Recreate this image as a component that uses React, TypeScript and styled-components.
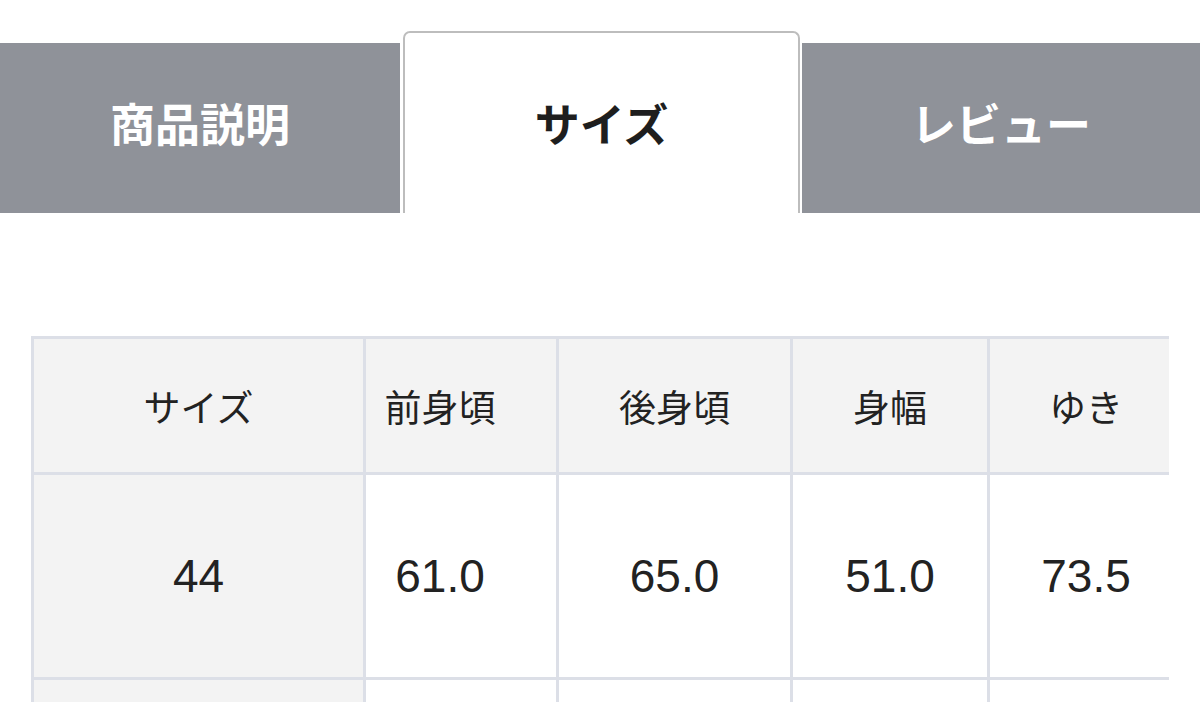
import React from "react";
import styled, { createGlobalStyle } from "styled-components";

const Global = createGlobalStyle`
  html, body { margin: 0; padding: 0; background: #ffffff; }
  body { width: 1200px; height: 702px; overflow: hidden; font-family: "Liberation Sans", "Noto Sans CJK JP", sans-serif; }
`;

const Page = styled.div`
  width: 1200px;
  height: 702px;
  overflow: hidden;
  background: #fff;
`;

const TabBar = styled.div`
  display: flex;
  align-items: flex-end;
  padding-top: 31px;
  height: 213px;
  box-sizing: border-box;
`;

const Tab = styled.div<{ $active?: boolean; $w: number; $ml?: number }>`
  box-sizing: border-box;
  width: ${(p) => p.$w}px;
  margin-left: ${(p) => p.$ml ?? 0}px;
  height: ${(p) => (p.$active ? 182 : 170)}px;
  display: flex;
  align-items: center;
  justify-content: center;
  font-family: "Noto Sans CJK JP", sans-serif;
  font-weight: 700;
  font-size: 45px;
  background: ${(p) => (p.$active ? "#ffffff" : "#8f9299")};
  color: ${(p) => (p.$active ? "#1e1e1e" : "#ffffff")};
  border: ${(p) => (p.$active ? "2px solid #bdbdbd" : "none")};
  border-bottom: none;
  border-radius: ${(p) => (p.$active ? "7px 7px 0 0" : "0")};
  padding-bottom: ${(p) => (p.$active ? 2 : 12)}px;
`;

const TableClip = styled.div`
  margin-top: 123px;
  margin-left: 31px;
  width: 1138px;
  overflow: hidden;
`;

const Grid = styled.div`
  display: grid;
  grid-template-columns: 332px 193px 234px 197px 195px;
  grid-template-rows: 136px 205px 60px;
  width: max-content;
  border-top: 3px solid #dcdfe7;
  border-left: 3px solid #dcdfe7;
`;

const Cell = styled.div<{ $head?: boolean; $grey?: boolean; $pr?: number }>`
  box-sizing: border-box;
  border-right: 3px solid #dcdfe7;
  border-bottom: 3px solid #dcdfe7;
  background: ${(p) => (p.$grey ? "#f3f3f3" : "#ffffff")};
  display: flex;
  align-items: center;
  justify-content: center;
  padding-right: ${(p) => p.$pr ?? 0}px;
  color: #222;
  font-family: "Liberation Sans", "Noto Sans CJK JP", sans-serif;
  font-size: ${(p) => (p.$head ? 37 : 46)}px;
  font-weight: 400;
`;

const heads = ["サイズ", "前身頃", "後身頃", "身幅", "ゆき"];
const row1 = ["44", "61.0", "65.0", "51.0", "73.5"];
const pads = [0, 42, 0, 0, 0];

export default function App() {
  return (
    <Page>
      <Global />
      <TabBar>
        <Tab $w={400}>商品説明</Tab>
        <Tab $w={397} $ml={3} $active>
          サイズ
        </Tab>
        <Tab $w={398} $ml={2}>レビュー</Tab>
      </TabBar>
      <TableClip>
        <Grid>
          {heads.map((h, i) => (
            <Cell key={"h" + i} $head $grey $pr={pads[i]}>
              {h}
            </Cell>
          ))}
          {row1.map((v, i) => (
            <Cell key={"r" + i} $grey={i === 0} $pr={pads[i]}>
              {v}
            </Cell>
          ))}
          {row1.map((_, i) => (
            <Cell key={"e" + i} $grey={i === 0} />
          ))}
        </Grid>
      </TableClip>
    </Page>
  );
}
